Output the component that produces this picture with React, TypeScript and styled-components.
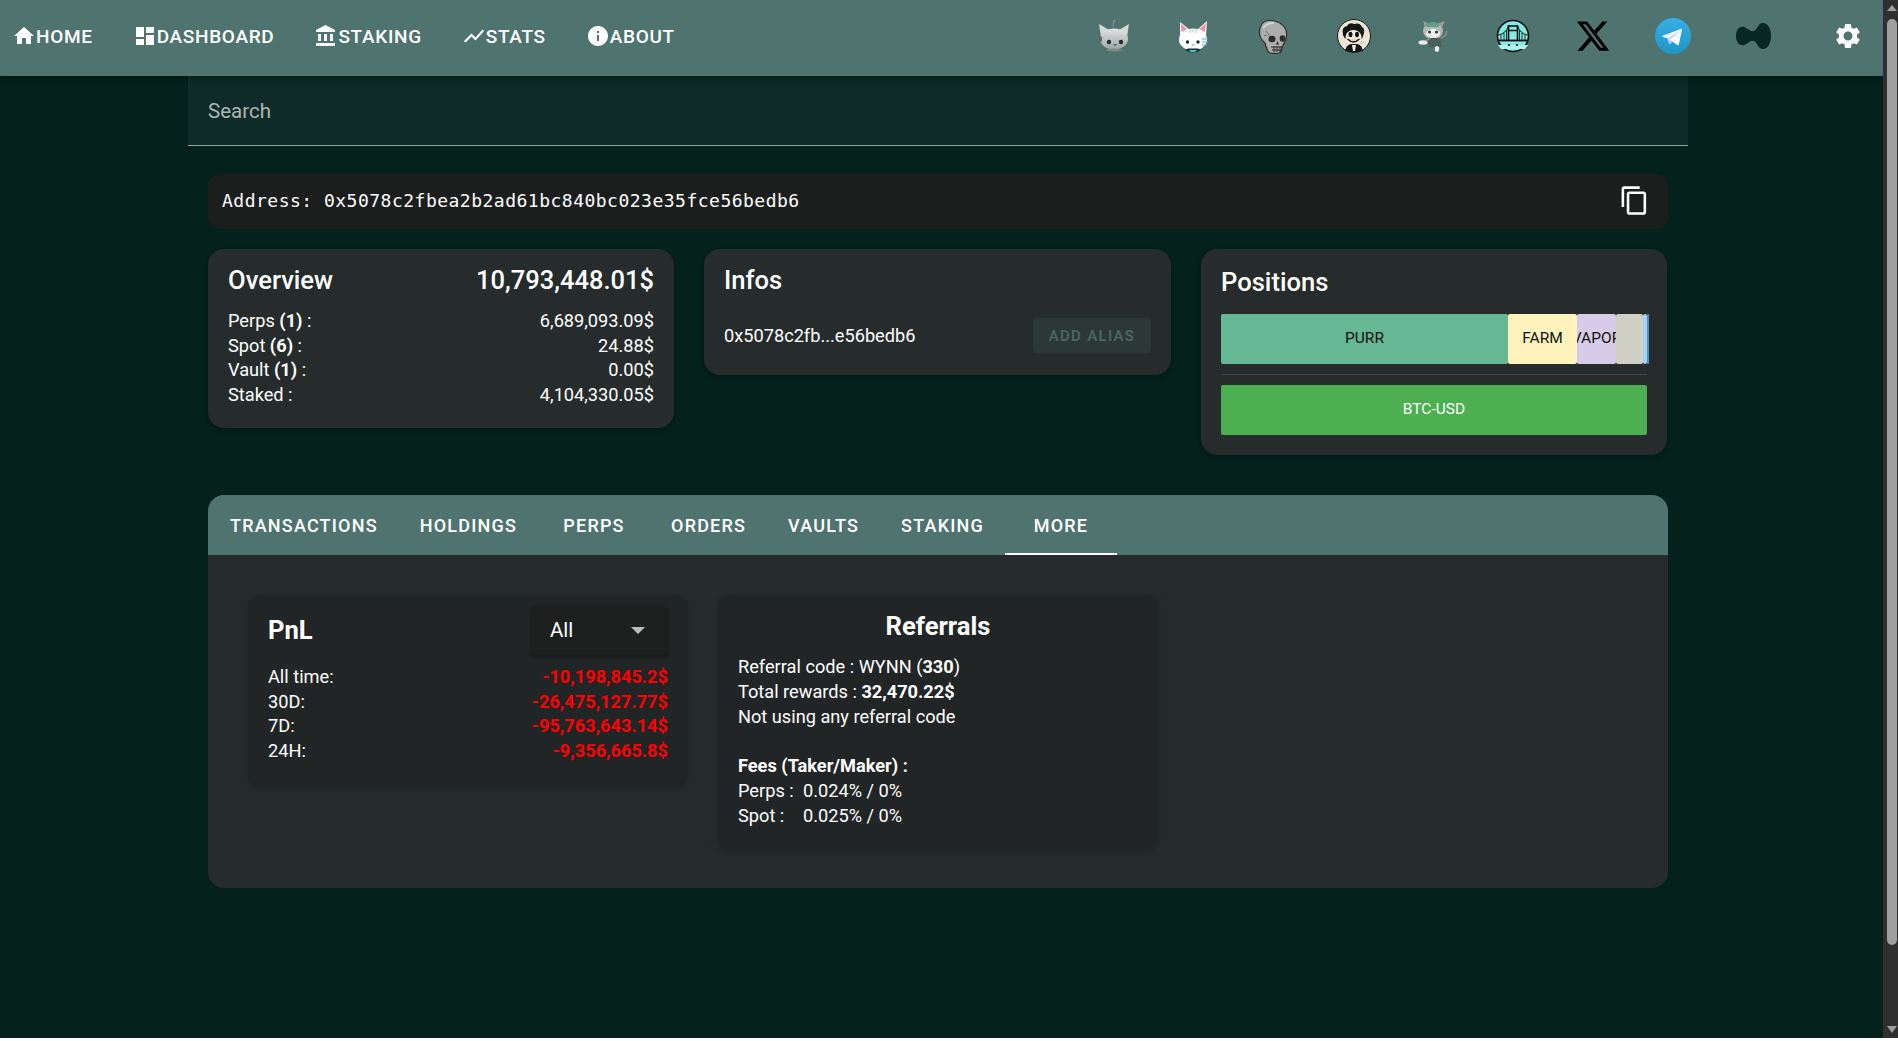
import React from "react";
import styled, { createGlobalStyle } from "styled-components";

const GlobalStyle = createGlobalStyle`
  html, body {
    margin: 0;
    padding: 0;
    height: 100%;
    overflow: hidden;
    background: #ffffff;
  }
  * {
    box-sizing: border-box;
  }
`;

const HOME = "M10 20v-6h4v6h5v-8h3L12 3 2 12h3v8z";
const DASHBOARD = "M3 13h8V3H3v10zm0 8h8v-6H3v6zm10 0h8V11h-8v10zm0-18v6h8V3h-8z";
const BANK =
  "M4 10v7h3v-7H4zm6 0v7h3v-7h-3zM2 22h19v-3H2v3zm14-12v7h3v-7h-3zm-4.5-9L2 6v2h19V6l-9.5-5z";
const CHART = "M3.5 18.49l6-6.01 4 4L22 6.92l-1.41-1.41-7.09 7.97-4-4L2 16.99z";
const INFO =
  "M12 2C6.48 2 2 6.48 2 12s4.48 10 10 10 10-4.48 10-10S17.52 2 12 2zm1 15h-2v-6h2v6zm0-8h-2V7h2v2z";
const GEAR =
  "M19.14 12.94c.04-.3.06-.61.06-.94 0-.32-.02-.64-.07-.94l2.03-1.58c.18-.14.23-.41.12-.61l-1.92-3.32c-.12-.22-.37-.29-.59-.22l-2.39.96c-.5-.38-1.03-.7-1.62-.94l-.36-2.54c-.04-.24-.24-.41-.48-.41h-3.84c-.24 0-.43.17-.47.41l-.36 2.54c-.59.24-1.13.57-1.62.94l-2.39-.96c-.22-.08-.47 0-.59.22L2.74 8.87c-.12.21-.08.47.12.61l2.03 1.58c-.05.3-.09.63-.09.94s.02.64.07.94l-2.03 1.58c-.18.14-.23.41-.12.61l1.92 3.32c.12.22.37.29.59.22l2.39-.96c.5.38 1.03.7 1.62.94l.36 2.54c.05.24.24.41.48.41h3.84c.24 0 .44-.17.47-.41l.36-2.54c.59-.24 1.13-.56 1.62-.94l2.39.96c.22.08.47 0 .59-.22l1.92-3.32c.12-.22.07-.47-.12-.61l-2.01-1.58zM12 15.6c-1.98 0-3.6-1.62-3.6-3.6s1.62-3.6 3.6-3.6 3.6 1.62 3.6 3.6-1.62 3.6-3.6 3.6z";
const COPY =
  "M16 1H4c-1.1 0-2 .9-2 2v14h2V3h12V1zm3 4H8c-1.1 0-2 .9-2 2v14c0 1.1.9 2 2 2h11c1.1 0 2-.9 2-2V7c0-1.1-.9-2-2-2zm0 16H8V7h11v14z";
const X_LOGO =
  "M18.244 2.25h3.308l-7.227 8.26 8.502 11.24H16.17l-5.214-6.817L4.99 21.75H1.68l7.73-8.835L1.254 2.25H8.08l4.713 6.231zm-1.161 17.52h1.833L7.084 4.126H5.117z";

const MuiIcon = ({ d, size = 24 }: { d: string; size?: number }) => (
  <svg width={size} height={size} viewBox="0 0 24 24" fill="currentColor">
    <path d={d} />
  </svg>
);

const RobotCat = () => (
  <svg width="36" height="36" viewBox="0 0 36 36">
    <defs>
      <linearGradient id="robotHead" x1="0" y1="0" x2="0" y2="1">
        <stop offset="0" stopColor="#dfe4e3" />
        <stop offset="1" stopColor="#9ca5a3" />
      </linearGradient>
    </defs>
    <path d="M18 9l1-6" stroke="#8d9795" strokeWidth="1" fill="none" />
    <circle cx="19" cy="3" r="1" fill="#8d9795" />
    <path d="M6 19L4 6l10 6zM32 19l2-13-10 6z" fill="#d4d9d8" />
    <ellipse cx="19" cy="21" rx="14" ry="10.5" fill="url(#robotHead)" />
    <ellipse cx="5.5" cy="21" rx="1.5" ry="3" fill="#5d6664" />
    <circle cx="14" cy="24" r="2.2" fill="#262c2b" />
    <circle cx="26" cy="24" r="2.2" fill="#262c2b" />
    <path d="M18.5 26l1.5 1.5 1.5-1.5" stroke="#262c2b" strokeWidth="1" fill="none" />
    <ellipse cx="19" cy="32" rx="8" ry="1.5" fill="#7f8a88" />
  </svg>
);

const WhiteCat = () => (
  <svg width="36" height="36" viewBox="0 0 36 36">
    <path d="M5 18L5 4l10 8zM31 18l1-15-10 9z" fill="#f5f5f5" />
    <path d="M6.500 14L6 6l6 5zM29.500 14l1.500-9-6.500 6z" fill="#ef8fab" />
    <ellipse cx="18" cy="21.5" rx="14" ry="11" fill="#ffffff" />
    <path d="M15 11v4M18 10.500v4M21 11v4" stroke="#a4c4d4" strokeWidth="1" />
    <path d="M27 21h6M27 24h6M27 27h5" stroke="#56b3d6" strokeWidth="1" />
    <circle cx="12.5" cy="24" r="1.7" fill="#17302c" />
    <circle cx="23" cy="24" r="1.7" fill="#17302c" />
    <path d="M17 26.5l1 1 1-1" stroke="#17302c" strokeWidth=".8" fill="none" />
    <path d="M10 32q8 5 16 0l-3-1.5h-10z" fill="#12332f" />
    <path d="M14 32h8l-2 2h-4z" fill="#4ec3d8" />
  </svg>
);

const Skull = () => (
  <svg width="36" height="36" viewBox="0 0 36 36">
    <path
      d="M14 2.5C8 2.5 4.5 8 4.5 14c0 6 3 9 5.5 11 1 4 2 8 4 9.500 3 1.200 9 1.200 11.500 0 1.500-3 1.500-6 3-8.500 2.500-3 3.500-7 3-10.500C31.500 8 24 2.500 14 2.500z"
      fill="#adadad"
      stroke="#2f2f2f"
      strokeWidth="1.200"
    />
    <path d="M8 10q4-5 11-5" stroke="#d5d5d5" strokeWidth="2" fill="none" />
    <path d="M11 13l4 5M9 18l3-1" stroke="#555" strokeWidth=".7" fill="none" />
    <ellipse cx="17" cy="21" rx="3.500" ry="3.200" fill="#2b2b2b" />
    <ellipse cx="27.500" cy="20.500" rx="2.800" ry="3.200" fill="#2b2b2b" />
    <path d="M22.500 23l-1.500 3.500h3z" fill="#2b2b2b" />
    <path d="M16 29h12M17 32h10" stroke="#2b2b2b" strokeWidth="1" />
    <path d="M19 28v6M22 28v6M25 28v6" stroke="#2b2b2b" strokeWidth="1" />
  </svg>
);

const CartoonBadge = () => (
  <svg width="36" height="36" viewBox="0 0 36 36">
    <circle cx="19" cy="18" r="16.500" fill="#ece6d6" stroke="#1b1b1b" strokeWidth="1" />
    <path d="M8 17q-2-8 4-9 2-4 7-2 6-2 8 3 4 2 1 9-1 5-9 6-9-1-11-7z" fill="#151515" />
    <ellipse cx="18.500" cy="19" rx="8" ry="7" fill="#f4f1e8" />
    <ellipse cx="15.500" cy="16.500" rx="2" ry="2.800" fill="#111" />
    <ellipse cx="22" cy="16.500" rx="2" ry="2.800" fill="#111" />
    <path d="M12.500 21q6 6 12 0" stroke="#111" strokeWidth="1.300" fill="#f0c9a8" />
    <path d="M10 33q1-6 6-7h6q5 1 6 7-9 2.500-18 0z" fill="#151515" />
    <path d="M17 27h4l-1 6h-2z" fill="#f4f1e8" />
  </svg>
);

const TinyCat = () => (
  <svg width="36" height="36" viewBox="0 0 36 36">
    <path d="M10 9L8 3l7 3zM27 9l3-6-8 3z" fill="#9c9c9c" />
    <ellipse cx="18" cy="13" rx="10" ry="8.500" fill="#b4b8b7" />
    <path d="M10 7q8-6 15 0l-2 2h-11z" fill="#5f9e87" />
    <ellipse cx="18" cy="15.500" rx="7" ry="4.500" fill="#ecefee" />
    <circle cx="14.500" cy="14" r="1.500" fill="#20302c" />
    <circle cx="21.500" cy="14" r="1.500" fill="#20302c" />
    <path d="M11 20h14l2 9h-13z" fill="#4a5f5a" />
    <path d="M26 20q5-1 6-7" stroke="#8a8f8d" strokeWidth="1.500" fill="none" />
    <ellipse cx="8" cy="24.500" rx="4.500" ry="2.200" fill="#eaeaea" />
    <path d="M11 23l4-3" stroke="#8a8f8d" strokeWidth="2" />
    <ellipse cx="22" cy="31" rx="2.200" ry="3" fill="#eaeaea" />
  </svg>
);

const BridgeBadge = () => (
  <svg width="36" height="36" viewBox="0 0 36 36">
    <circle cx="18" cy="18" r="15.500" fill="#82ebe4" stroke="#0b0b0b" strokeWidth="1.600" />
    <path d="M3 27h30l-3 4H6z" fill="#b4f4ef" />
    <path d="M3 22.500h30" stroke="#0b0b0b" strokeWidth="1.800" />
    <path d="M13.500 23V7M22.500 23V7M13.500 8h9M13.500 12.500h9" stroke="#0b0b0b" strokeWidth="1.600" fill="none" />
    <path d="M3.500 17q7-1 10-9M32.500 17q-7-1-10-9" stroke="#0b0b0b" strokeWidth="1" fill="none" />
    <path d="M6 17v5M9 15v7M11.500 12v10M24.500 12v10M27 15v7M30 17v5" stroke="#0b0b0b" strokeWidth=".8" />
    <circle cx="14" cy="27" r="1" fill="#0b0b0b" />
    <circle cx="22" cy="27" r="1" fill="#0b0b0b" />
  </svg>
);

const TelegramBadge = () => (
  <svg width="36" height="36" viewBox="0 0 240 240">
    <defs>
      <linearGradient id="tgSky" x1="0.5" y1="0" x2="0.5" y2="1">
        <stop offset="0" stopColor="#37aee2" />
        <stop offset="1" stopColor="#1e96c8" />
      </linearGradient>
      <linearGradient id="tgPlane" x1="0.66" y1="0.44" x2="0.85" y2="0.8">
        <stop offset="0" stopColor="#eff7fc" />
        <stop offset="1" stopColor="#ffffff" />
      </linearGradient>
    </defs>
    <circle cx="120" cy="120" r="120" fill="url(#tgSky)" />
    <path fill="#c8daea" d="M98 175c-3.888 0-3.227-1.468-4.568-5.17L82 132.207 170 80" />
    <path fill="#a9c9dd" d="M98 175c3 0 4.325-1.372 6-3l16-15.558-19.958-12.035" />
    <path
      fill="url(#tgPlane)"
      d="M100.04 144.41l48.36 35.729c5.519 3.045 9.501 1.468 10.876-5.123l19.685-92.763c2.015-8.08-3.08-11.746-8.36-9.349l-115.59 44.571c-7.89 3.165-7.843 7.567-1.438 9.528l29.663 9.259 68.673-43.325c3.242-1.966 6.218-.91 3.776 1.258"
    />
  </svg>
);

const HyperMark = () => (
  <svg width="36" height="36" viewBox="0 0 36 36">
    <path
      d="M1 18C1 11 5 8 9 9C13 10 15 14 19 13C22 12 23 5 28 5C33 5 36 11 36 18C36 25 33 31 28 31C23 31 22 24 19 23C15 22 13 26 9 27C5 28 1 25 1 18Z"
      fill="#072723"
    />
  </svg>
);

const NAV_LINKS = [
  { label: "Home", icon: HOME },
  { label: "Dashboard", icon: DASHBOARD },
  { label: "Staking", icon: BANK },
  { label: "Stats", icon: CHART },
  { label: "About", icon: INFO },
];

const TABS = ["Transactions", "Holdings", "Perps", "Orders", "Vaults", "Staking", "More"];

const SEGMENTS = [
  { name: "PURR", width: 287, color: "#66b794" },
  { name: "FARM", width: 69, color: "#fff3bd" },
  { name: "VAPOR", width: 39, color: "#d6cbe9" },
  { name: "", width: 27, color: "#cfcfc3" },
  { name: "", width: 4, color: "#a4d4f0" },
  { name: "", width: 2, color: "#4a8fd8" },
];

const PNL = [
  { label: "All time:", value: "-10,198,845.2$" },
  { label: "30D:", value: "-26,475,127.77$" },
  { label: "7D:", value: "-95,763,643.14$" },
  { label: "24H:", value: "-9,356,665.8$" },
];

export default function App() {
  return (
    <Shell>
      <GlobalStyle />
      <Page>
        <NavBar>
          <NavLinks>
            {NAV_LINKS.map((link) => (
              <NavLink key={link.label}>
                <MuiIcon d={link.icon} />
                {link.label}
              </NavLink>
            ))}
          </NavLinks>
          <NavBadges>
            <Badge><RobotCat /></Badge>
            <Badge><WhiteCat /></Badge>
            <Badge><Skull /></Badge>
            <Badge><CartoonBadge /></Badge>
            <Badge><TinyCat /></Badge>
            <Badge><BridgeBadge /></Badge>
            <Badge>
              <svg width="36" height="36" viewBox="0 0 24 24" fill="#000000">
                <path d={X_LOGO} />
              </svg>
            </Badge>
            <Badge><TelegramBadge /></Badge>
            <Badge><HyperMark /></Badge>
            <SettingsButton>
              <MuiIcon d={GEAR} size={30} />
            </SettingsButton>
          </NavBadges>
        </NavBar>

        <Main>
          <SearchBox>
            <SearchPlaceholder>Search</SearchPlaceholder>
          </SearchBox>

          <Content>
            <AddressCard>
              <AddressText>Address: 0x5078c2fbea2b2ad61bc840bc023e35fce56bedb6</AddressText>
              <CopyButton>
                <MuiIcon d={COPY} size={31} />
              </CopyButton>
            </AddressCard>

            <SummaryGrid>
              <Card>
                <CardHeader>
                  <CardTitle>Overview</CardTitle>
                  <TotalValue>10,793,448.01$</TotalValue>
                </CardHeader>
                <Row><span>Perps <b>(1)</b> :</span><span>6,689,093.09$</span></Row>
                <Row><span>Spot <b>(6)</b> :</span><span>24.88$</span></Row>
                <Row><span>Vault <b>(1)</b> :</span><span>0.00$</span></Row>
                <Row><span>Staked :</span><span>4,104,330.05$</span></Row>
              </Card>

              <Card>
                <InfosHeader>
                  <CardTitle>Infos</CardTitle>
                </InfosHeader>
                <AliasRow>
                  <span>0x5078c2fb...e56bedb6</span>
                  <AliasButton>Add alias</AliasButton>
                </AliasRow>
              </Card>

              <PositionsCard>
                <PositionsHeader>
                  <CardTitle>Positions</CardTitle>
                </PositionsHeader>
                <SegmentBar>
                  {SEGMENTS.map((segment, index) => (
                    <Segment key={index} $width={segment.width} $color={segment.color}>
                      {segment.name}
                    </Segment>
                  ))}
                </SegmentBar>
                <Divider />
                <PerpBar>BTC-USD</PerpBar>
              </PositionsCard>
            </SummaryGrid>

            <TabsCard>
              <TabBar>
                {TABS.map((tab) => (
                  <Tab key={tab} $active={tab === "More"}>
                    {tab}
                  </Tab>
                ))}
              </TabBar>
              <TabBody>
                <InnerCard>
                  <PnlHeader>
                    <PnlTitle>PnL</PnlTitle>
                    <SelectBox>
                      All
                      <SelectArrow />
                    </SelectBox>
                  </PnlHeader>
                  {PNL.map((row) => (
                    <Row key={row.label}>
                      <span>{row.label}</span>
                      <LossValue>{row.value}</LossValue>
                    </Row>
                  ))}
                </InnerCard>

                <InnerCard>
                  <ReferralTitle>Referrals</ReferralTitle>
                  <TextLine>Referral code : WYNN (<b>330</b>)</TextLine>
                  <TextLine>Total rewards : <b>32,470.22$</b></TextLine>
                  <TextLine>Not using any referral code</TextLine>
                  <TextLine>&nbsp;</TextLine>
                  <TextLine><b>Fees (Taker/Maker) :</b></TextLine>
                  <TextLine><FeeLabel>Perps :</FeeLabel>0.024% / 0%</TextLine>
                  <TextLine><FeeLabel>Spot :</FeeLabel>0.025% / 0%</TextLine>
                </InnerCard>
              </TabBody>
            </TabsCard>
          </Content>
        </Main>
      </Page>
      <ScrollRail>
        <ArrowUp />
        <ScrollThumb />
        <ArrowDown />
      </ScrollRail>
    </Shell>
  );
}

const Shell = styled.div`
  height: calc(100vh - 3px);
  display: flex;
  overflow: hidden;
  background: #04211c;
  color: #ffffff;
  font-family: Roboto, "Liberation Sans", sans-serif;
  font-size: 18.2px;
`;

const Page = styled.div`
  flex: 1;
  min-width: 0;
  overflow: hidden;
`;

const ScrollRail = styled.div`
  flex: none;
  width: 15px;
  display: flex;
  flex-direction: column;
  align-items: center;
  background: #2f2f2f;
`;

const ArrowUp = styled.span`
  margin: 5px 0 0 2px;
  border-left: 5px solid transparent;
  border-right: 5px solid transparent;
  border-bottom: 6px solid #9f9f9f;
`;

const ScrollThumb = styled.span`
  width: 10px;
  height: 926px;
  margin: 8px 0 0 3px;
  background: #9f9f9f;
  border-radius: 5px;
`;

const ArrowDown = styled.span`
  margin: auto 0 5px 2px;
  border-left: 5px solid transparent;
  border-right: 5px solid transparent;
  border-top: 7px solid #9f9f9f;
`;

const NavBar = styled.header`
  position: relative;
  z-index: 2;
  height: 76px;
  display: flex;
  align-items: center;
  justify-content: space-between;
  padding: 0 20px 4px 12px;
  background: #4f746f;
  box-shadow: 0 2px 6px rgba(0, 0, 0, 0.35);
`;

const NavLinks = styled.nav`
  display: flex;
  align-items: center;
  gap: 40px;
`;

const NavLink = styled.a`
  display: flex;
  align-items: center;
  font-size: 19px;
  font-weight: 500;
  letter-spacing: 0.68px;
  text-transform: uppercase;
  color: #ffffff;
`;

const NavBadges = styled.div`
  display: flex;
  align-items: center;
  gap: 44px;
`;

const Badge = styled.a`
  display: block;
  width: 36px;
  height: 36px;
  line-height: 0;
`;

const SettingsButton = styled.button`
  display: flex;
  margin-left: 18px;
  padding: 0;
  border: 0;
  background: none;
  color: #ffffff;
`;

const Main = styled.main`
  width: 1500px;
  margin-left: 188px;
`;

const SearchBox = styled.div`
  height: 70px;
  display: flex;
  align-items: center;
  padding: 0 20px 0;
  background: #0f2b27;
  border-bottom: 1px solid #93a3a0;
`;

const SearchPlaceholder = styled.span`
  color: #a9b6b3;
  font-size: 20.5px;
`;

const Content = styled.div`
  display: flex;
  flex-direction: column;
  padding: 28px 20px 0;
`;

const AddressCard = styled.div`
  width: 1460px;
  height: 55px;
  display: flex;
  align-items: center;
  justify-content: space-between;
  padding: 0 18px 2px 14px;
  background: #1c1e1e;
  border-radius: 12px;
`;

const AddressText = styled.span`
  font-family: "DejaVu Sans Mono", "Liberation Mono", monospace;
  font-size: 18px;
  letter-spacing: 0.49px;
  color: #ffffff;
`;

const CopyButton = styled.button`
  display: flex;
  padding: 0;
  border: 0;
  background: none;
  color: #ffffff;
`;

const SummaryGrid = styled.div`
  display: grid;
  grid-template-columns: 466px 467px 466px;
  gap: 30px;
  align-items: start;
  margin-top: 20px;
`;

const Card = styled.section`
  padding: 19px 20px 20px;
  background: #252c2b;
  border-radius: 16px;
  box-shadow: 0 2px 4px rgba(0, 0, 0, 0.25);
`;

const PositionsCard = styled(Card)`
  padding-bottom: 20px;
`;

const CardHeader = styled.div`
  height: 24px;
  margin-bottom: 17px;
  display: flex;
  align-items: center;
  justify-content: space-between;
`;

const InfosHeader = styled(CardHeader)`
  margin-bottom: 26px;
`;

const PositionsHeader = styled(CardHeader)`
  margin-top: 2px;
  margin-bottom: 20px;
`;

const CardTitle = styled.h2`
  margin: 0;
  font-size: 25.6px;
  font-weight: 500;
`;

const TotalValue = styled.span`
  font-size: 25.5px;
  font-weight: 500;
`;

const Row = styled.div`
  display: flex;
  justify-content: space-between;
  line-height: 24.7px;

  b {
    font-weight: 700;
  }
`;

const AliasRow = styled.div`
  display: flex;
  align-items: center;
  justify-content: space-between;
  padding-bottom: 2px;
`;

const AliasButton = styled.button`
  width: 118px;
  height: 35px;
  padding: 0;
  border: 0;
  border-radius: 4px;
  background: #2c3835;
  color: #4a6a65;
  font-family: inherit;
  font-size: 15px;
  font-weight: 500;
  letter-spacing: 1.3px;
  text-transform: uppercase;
`;

const SegmentBar = styled.div`
  display: flex;
  width: 428px;
  height: 50px;
`;

const Segment = styled.div<{ $width: number; $color: string }>`
  flex: none;
  display: flex;
  align-items: center;
  justify-content: center;
  width: ${(p) => p.$width}px;
  padding-bottom: 3px;
  overflow: hidden;
  background: ${(p) => p.$color};
  border-radius: 2px;
  color: #111111;
  font-size: 15.5px;
`;

const Divider = styled.hr`
  height: 1px;
  margin: 10px 0;
  border: 0;
  background: #3b4543;
`;

const PerpBar = styled.div`
  height: 50px;
  display: flex;
  align-items: center;
  justify-content: center;
  padding-bottom: 3px;
  background: #4caf50;
  border-radius: 2px;
  font-size: 15.5px;
`;

const TabsCard = styled.section`
  width: 1460px;
  margin-top: 40px;
  overflow: hidden;
  background: #252c2b;
  border-radius: 16px;
`;

const TabBar = styled.div`
  height: 60px;
  display: flex;
  padding-left: 1px;
  background: #4f746f;
`;

const Tab = styled.div<{ $active: boolean }>`
  min-width: 112px;
  display: flex;
  align-items: center;
  justify-content: center;
  padding: 3px 21px 0;
  border-bottom: 2px solid ${(p) => (p.$active ? "#ffffff" : "transparent")};
  font-size: 18px;
  font-weight: 500;
  letter-spacing: 1.2px;
  text-transform: uppercase;
  color: #ffffff;
`;

const TabBody = styled.div`
  display: grid;
  grid-template-columns: 440px 440px;
  gap: 30px;
  align-items: start;
  padding: 40px 40px 37px;
`;

const InnerCard = styled.div`
  padding: 11px 20px 23px;
  background: #212526;
  border-radius: 12px;
  box-shadow: 0 2px 8px rgba(0, 0, 0, 0.18);
`;

const PnlHeader = styled.div`
  display: flex;
  align-items: center;
  justify-content: space-between;
  margin-bottom: 10px;
`;

const PnlTitle = styled.h3`
  margin: 0 0 2px;
  font-size: 25.6px;
  font-weight: 700;
`;

const SelectBox = styled.div`
  position: relative;
  width: 137px;
  height: 49px;
  display: flex;
  align-items: center;
  padding: 0 0 2px 19px;
  background: #1e2020;
  border-radius: 4px;
  font-size: 20.5px;
  box-shadow: 0 2px 3px rgba(0, 0, 0, 0.35);
`;

const SelectArrow = styled.span`
  position: absolute;
  right: 23px;
  top: 21px;
  border-left: 7px solid transparent;
  border-right: 7px solid transparent;
  border-top: 7px solid #bdbdbd;
`;

const LossValue = styled.span`
  color: #ff0000;
  font-weight: 700;
`;

const ReferralTitle = styled.h3`
  margin: 6px 0 15px;
  font-size: 25.6px;
  font-weight: 700;
  line-height: 28px;
  text-align: center;
`;

const TextLine = styled.div`
  line-height: 24.75px;

  b {
    font-weight: 700;
  }
`;

const FeeLabel = styled.span`
  display: inline-block;
  width: 65px;
`;
